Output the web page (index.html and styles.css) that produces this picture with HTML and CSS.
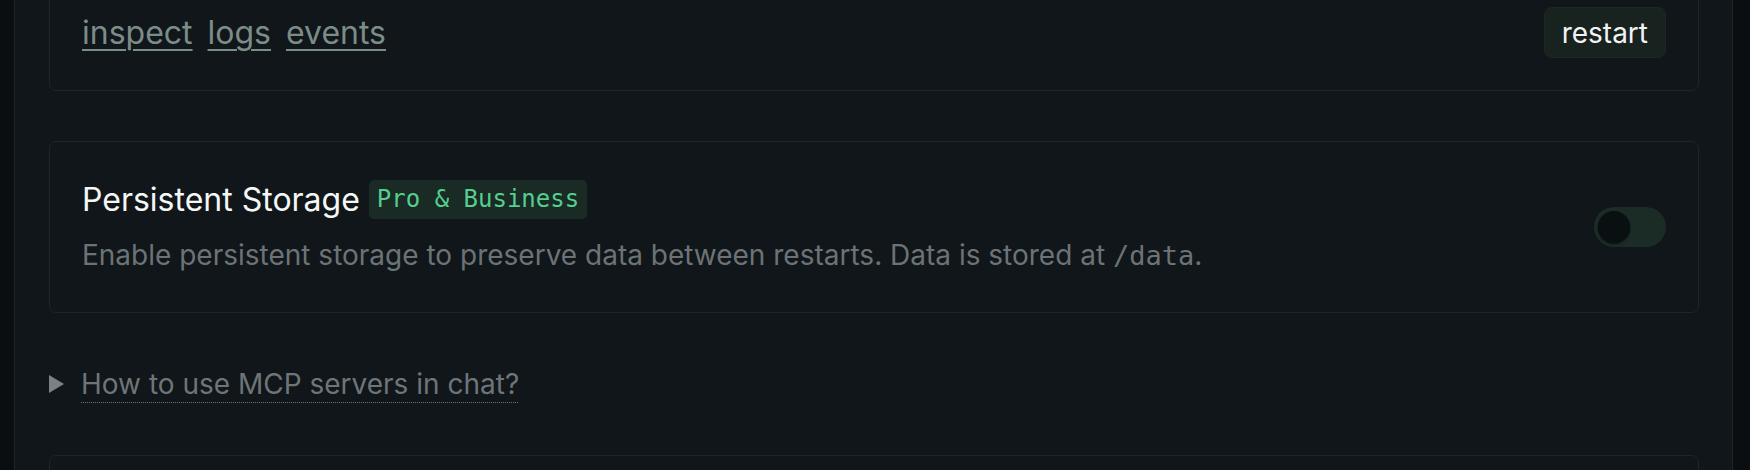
FILE: index.html
```html
<!DOCTYPE html>
<html lang="en">
<head>
<meta charset="utf-8">
<title>Space settings</title>
<link rel="stylesheet" href="styles.css">
</head>
<body>
<div class="page">
  <div class="panel">
    <section class="card card-actions">
      <nav class="links">
        <a href="#" class="link">inspect</a>
        <a href="#" class="link">logs</a>
        <a href="#" class="link">events</a>
      </nav>
      <button class="btn" type="button">restart</button>
    </section>

    <section class="card card-setting">
      <div class="setting-text">
        <div class="setting-title">
          <h3 class="title">Persistent Storage</h3>
          <span class="badge">Pro &amp; Business</span>
        </div>
        <p class="desc">Enable persistent storage to preserve data between restarts. Data is stored at <code class="code">/data</code>.</p>
      </div>
      <button class="toggle" type="button" role="switch" aria-checked="false"><span class="knob"></span></button>
    </section>

    <details class="help">
      <summary class="help-summary">
        <svg class="marker" width="15" height="18" viewBox="0 0 15 18" aria-hidden="true"><polygon points="0,0 15,9 0,18" fill="currentColor"/></svg>
        <span class="help-text">How to use MCP servers in chat?</span>
      </summary>
    </details>

    <section class="card card-next"></section>
  </div>
</div>
</body>
</html>
```

FILE: styles.css
```css
* { box-sizing: border-box; }

html, body {
  margin: 0;
  padding: 0;
  background: #0a0e10;
  overflow: hidden;
}

body {
  font-family: Inter, "Noto Sans", sans-serif;
  color: #e8eaeb;
}

.page {
  margin: 0 17px 0 14px;
}

.panel {
  margin-top: -26px;
  background: #101619;
  border-left: 1px solid #1e2427;
  border-right: 1px solid #1e2427;
  padding: 0 33px 0 34px;
  display: flex;
  flex-direction: column;
  gap: 50px;
  min-height: 600px;
}

.card {
  border: 1px solid #1e2427;
  border-radius: 7px;
  background: #101619;
  padding: 32px;
}

.card-actions {
  display: flex;
  align-items: center;
  justify-content: space-between;
}

.links {
  display: flex;
  gap: 15px;
}

.link {
  font-size: 32px;
  color: #7b8c89;
  text-decoration: underline;
  text-decoration-thickness: 2px;
  text-underline-offset: 5px;
}

.btn {
  font-family: inherit;
  font-size: 28px;
  color: #f2f3f3;
  background: #18221f;
  border: 1px solid #1c2824;
  border-radius: 8px;
  height: 51px;
  padding: 0 17px;
  line-height: 1;
}

.card-setting {
  display: flex;
  align-items: center;
  justify-content: space-between;
}

.setting-title {
  display: flex;
  align-items: center;
  gap: 9px;
  height: 50px;
}

.title {
  margin: 0;
  font-size: 32px;
  font-weight: 400;
  color: #f5f6f6;
}

.badge {
  display: inline-flex;
  align-items: center;
  height: 39px;
  padding: 0 8px;
  border-radius: 5px;
  background: #1a2a25;
  color: #55cf8f;
  font-family: "DejaVu Sans Mono", monospace;
  font-size: 24px;
}

.desc {
  margin: 7px 0 0;
  font-size: 28px;
  line-height: 48px;
  color: #6c7376;
}

.code {
  font-family: "DejaVu Sans Mono", monospace;
  font-size: 27px;
}

.toggle {
  width: 72px;
  height: 40px;
  border: 0;
  padding: 0 4px;
  border-radius: 20px;
  background: #1b2c27;
  display: flex;
  align-items: center;
}

.knob {
  width: 32px;
  height: 32px;
  border-radius: 50%;
  background: #0a0f12;
  box-shadow: 0 1px 2px rgba(0, 0, 0, 0.7);
}

.help-summary {
  list-style: none;
  display: flex;
  align-items: center;
  gap: 17px;
  cursor: pointer;
  color: #7b8084;
}

.help-summary::-webkit-details-marker { display: none; }

.marker { flex: none; }

.help-text {
  font-size: 28px;
  line-height: 42px;
  color: #6e7578;
  background-image: linear-gradient(to right, #6e7578 50%, transparent 50%);
  background-size: 2px 1px;
  background-repeat: repeat-x;
  background-position: 0 39px;
}

.card-next {
  height: 240px;
}
```
